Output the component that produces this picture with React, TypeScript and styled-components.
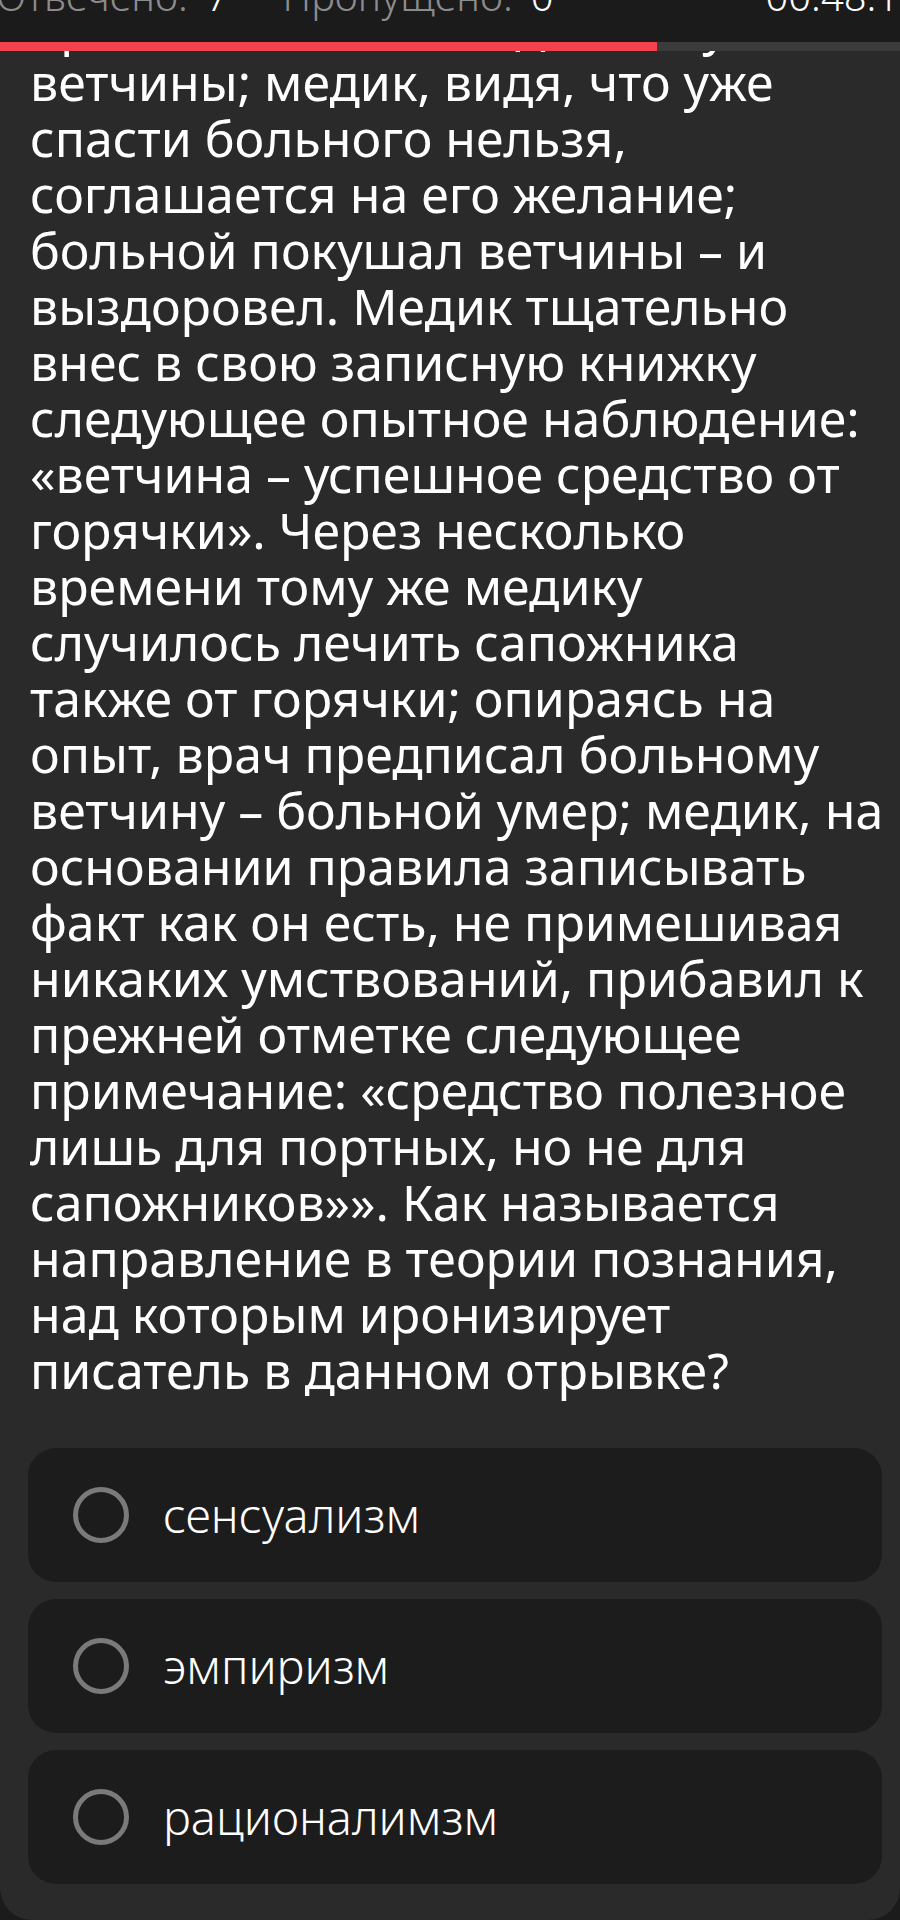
import React from 'react'
import styled, { createGlobalStyle } from 'styled-components'

const GlobalStyle = createGlobalStyle`
  html, body {
    margin: 0;
    padding: 0;
    background: #1b1b1b;
  }
  body {
    font-family: "Noto Sans", "Open Sans", "DejaVu Sans", sans-serif;
    -webkit-font-smoothing: antialiased;
  }
`

//Screen column
const Screen = styled.div`
  width: 900px;
  height: 1920px;
  display: flex;
  flex-direction: column;
  background: #2a2a2a;
  border-radius: 0 0 32px 32px;
  overflow: hidden;
`

//TopBar with counters, scrolled half out of view
const TopBar = styled.header`
  height: 42px;
  flex-shrink: 0;
  background: #1b1b1b;
  overflow: hidden;
`

const StatsRow = styled.div`
  display: flex;
  align-items: baseline;
  margin: -24px -22px 0 -4px;
  font-size: 40px;
  line-height: 40px;
  font-weight: 300;
`

const Stat = styled.span`
  display: inline-flex;
  gap: 18px;
  margin-right: 54px;
  color: #8c8c8c;
  white-space: nowrap;
`

const StatValue = styled.span`
  color: #ffffff;
`

const Timer = styled.span`
  margin-left: auto;
  color: #ffffff;
  white-space: nowrap;
`

//Progress bar
const Progress = styled.div`
  height: 9px;
  flex-shrink: 0;
  background: #3b3b3b;
`

const ProgressFill = styled.div`
  height: 100%;
  background: #f2424c;
`

//Body with question + answers
const Body = styled.main`
  flex: 1;
  overflow: hidden;
  padding: 0 18px 0 28px;
`

const Question = styled.div`
  margin: -53px 0 0 2px;
  color: #ffffff;
  font-size: 50px;
  line-height: 56px;
`

const Line = styled.span`
  display: block;
  white-space: nowrap;
`

const Options = styled.div`
  display: flex;
  flex-direction: column;
  gap: 17px;
  margin-top: 50px;
`

const Option = styled.label`
  display: flex;
  align-items: center;
  gap: 34px;
  height: 134px;
  padding-left: 45px;
  box-sizing: border-box;
  background: #1c1c1c;
  border-radius: 28px;
`

const Radio = styled.span`
  width: 56px;
  height: 56px;
  flex-shrink: 0;
  box-sizing: border-box;
  border: 5px solid #7a7a7a;
  border-radius: 50%;
`

const OptionText = styled.span`
  color: #ffffff;
  font-size: 47px;
  font-weight: 300;
`

const lines = [
  'просит позволения дать ему',
  'ветчины; медик, видя, что уже',
  'спасти больного нельзя,',
  'соглашается на его желание;',
  'больной покушал ветчины – и',
  'выздоровел. Медик тщательно',
  'внес в свою записную книжку',
  'следующее опытное наблюдение:',
  '«ветчина – успешное средство от',
  'горячки». Через несколько',
  'времени тому же медику',
  'случилось лечить сапожника',
  'также от горячки; опираясь на',
  'опыт, врач предписал больному',
  'ветчину – больной умер; медик, на',
  'основании правила записывать',
  'факт как он есть, не примешивая',
  'никаких умствований, прибавил к',
  'прежней отметке следующее',
  'примечание: «средство полезное',
  'лишь для портных, но не для',
  'сапожников»». Как называется',
  'направление в теории познания,',
  'над которым иронизирует',
  'писатель в данном отрывке?',
]

const answers = ['сенсуализм', 'эмпиризм', 'рационалимзм']

const progress = 657 / 900

export default function App() {
  return (
    <>
      <GlobalStyle />
      <Screen>
        <TopBar>
          <StatsRow>
            <Stat>Отвечено: <StatValue>7</StatValue></Stat>
            <Stat>Пропущено: <StatValue>0</StatValue></Stat>
            <Timer>00:48:13</Timer>
          </StatsRow>
        </TopBar>
        <Progress>
          <ProgressFill style={{ width: `${progress * 100}%` }} />
        </Progress>
        <Body>
          <Question>
            {lines.map((l, i) => (
              <Line key={i}>{l}</Line>
            ))}
          </Question>
          <Options>
            {answers.map((a) => (
              <Option key={a}>
                <Radio />
                <OptionText>{a}</OptionText>
              </Option>
            ))}
          </Options>
        </Body>
      </Screen>
    </>
  )
}
